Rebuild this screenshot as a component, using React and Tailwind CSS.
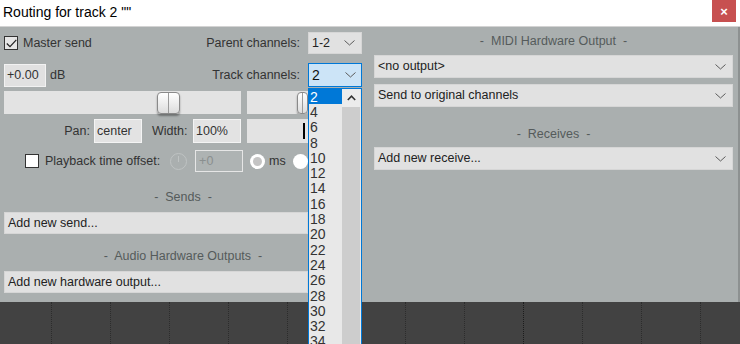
import React from 'react'

const CHANNELS = [2, 4, 6, 8, 10, 12, 14, 16, 18, 20, 22, 24, 26, 28, 30, 32, 34]
const GRID = [52, 111, 170, 229, 288, 347, 406, 464, 523, 582, 641, 701]

function Chevron() {
    return (
        <svg width="11" height="6" viewBox="0 0 11 6" className="shrink-0">
            <polyline points="0.5,0.5 5.5,5 10.5,0.5" fill="none" stroke="#5a5a5a" strokeWidth="1" />
        </svg>
    )
}

function Combo({ children, className = '' }) {
    return (
        <div className={`flex items-center justify-between bg-[#e1e1e1] border border-[#d6d6d6] pl-[3px] pr-[6px] text-[12.5px] text-[#222] ${className}`}>
            <span>{children}</span>
            <Chevron />
        </div>
    )
}

function Header({ children }) {
    return (
        <div className="text-center text-[12.5px] leading-[16px] text-[#555b5b] whitespace-pre">
            {children}
        </div>
    )
}

function Thumb() {
    return (
        <div className="relative w-[23px] h-[22px] rounded-[4px] border border-[#8a8a8a] bg-gradient-to-b from-white to-[#dcdcdc] shadow-[0_2px_2px_rgba(0,0,0,0.35)] flex justify-center">
            <div className="w-px h-full bg-[#9a9a9a]" />
        </div>
    )
}

export default function App() {
    return (
        <div className="relative w-[740px] h-[344px] overflow-hidden bg-[#424242] flex flex-col font-['Liberation_Sans',Arial,sans-serif]">
            {/* Title bar */}
            <div className="h-[27px] bg-white flex items-start justify-between border-b border-[#d3d3d3]">
                <span className="pl-[3px] pt-[4px] text-[14px] leading-[17px] text-black">Routing for track 2 ""</span>
                <div className="mr-[4px] w-[24px] h-[22px] bg-[#c75050] flex items-center justify-center text-white text-[13px] font-bold leading-none">×</div>
            </div>

            {/* Body */}
            <div className="h-[275px] bg-[#aaafaf] flex border-r-2 border-[#8d9191]">
                {/* Left column */}
                <div className="w-[362px] pl-[4px] pt-[5px] flex flex-col text-[12.5px] text-[#333]">
                    <div className="h-[22px] flex items-center">
                        <div className="w-[14px] h-[14px] border border-[#333] bg-[#e6e6e6] flex items-center justify-center">
                            <svg width="11" height="9" viewBox="0 0 11 9">
                                <polyline points="0.8,4.5 4,7.7 10.3,0.8" fill="none" stroke="#222" strokeWidth="1.2" />
                            </svg>
                        </div>
                        <span className="ml-[5px]">Master send</span>
                        <span className="ml-auto mr-[8px]">Parent channels:</span>
                        <Combo className="w-[54px] h-[22px]">1-2</Combo>
                    </div>

                    <div className="mt-[9px] h-[24px] flex items-center">
                        <div className="w-[42px] h-[23px] bg-[#e1e1e1] border border-[#f2f2f2] flex items-center pl-[2px]">+0.00</div>
                        <span className="ml-[4px]">dB</span>
                        <span className="ml-auto mr-[8px]">Track channels:</span>
                        <div className="w-[54px] h-[24px] bg-[#cce4f7] border border-[#0078d7] flex items-center justify-between pl-[3px] pr-[5px] text-[#111]">
                            <span className="text-[14px]">2</span>
                            <Chevron />
                        </div>
                    </div>

                    <div className="mt-[4px] h-[23px] flex gap-[6px]">
                        <div className="w-[237px] bg-[#e3e3e3] flex items-center pl-[153px]">
                            <Thumb />
                        </div>
                        <div className="w-[61px] bg-[#e3e3e3] flex items-center pl-[50px] overflow-hidden">
                            <Thumb />
                        </div>
                    </div>

                    <div className="mt-[5px] h-[24px] flex items-center">
                        <span className="w-[86px] text-right">Pan:</span>
                        <div className="ml-[4px] w-[48px] h-[24px] bg-[#e3e3e3] border border-[#f4f4f4] flex items-center pl-[2px]">center</div>
                        <span className="ml-[10px]">Width:</span>
                        <div className="ml-auto w-[48px] h-[24px] bg-[#e3e3e3] border border-[#f4f4f4] flex items-center pl-[2px]">100%</div>
                        <div className="ml-[6px] mr-[54px] w-[61px] h-[24px] bg-[#e3e3e3] flex items-center justify-end pr-[3px]">
                            <div className="w-[2px] h-[16px] bg-black" />
                        </div>
                    </div>

                    <div className="mt-[7px] h-[22px] flex items-center">
                        <div className="ml-[21px] w-[14px] h-[14px] border border-[#333] bg-white" />
                        <span className="ml-[6px]">Playback time offset:</span>
                        <div className="ml-[10px] w-[17px] h-[17px] rounded-full border border-[#bfc3c3] flex justify-center">
                            <div className="w-px h-[6px] mt-[2px] bg-[#bfc3c3]" />
                        </div>
                        <div className="ml-[8px] w-[48px] h-[22px] border border-[#e6e6e6] bg-[#aeb3b3] flex items-center pl-[3px] text-[#8a8f8f]">+0</div>
                        <div className="ml-[7px] w-[15px] h-[15px] rounded-full bg-white flex items-center justify-center">
                            <div className="w-[9px] h-[9px] rounded-full bg-[#c4c4c4]" />
                        </div>
                        <span className="ml-[4px]">ms</span>
                        <div className="ml-[7px] w-[15px] h-[15px] rounded-full bg-white" />
                    </div>

                    <div className="mt-[17px]">
                        <Header>{'-  Sends  -'}</Header>
                    </div>
                    <div className="mt-[7px] w-[304px] h-[22px] bg-[#e1e1e1] border border-[#d6d6d6] flex items-center pl-[3px] text-[#222]">Add new send...</div>

                    <div className="mt-[14px]">
                        <Header>{'-  Audio Hardware Outputs  -'}</Header>
                    </div>
                    <div className="mt-[7px] w-[304px] h-[22px] bg-[#e1e1e1] border border-[#d6d6d6] flex items-center pl-[3px] text-[#222]">Add new hardware output...</div>
                </div>

                {/* Right column */}
                <div className="ml-[12px] w-[359px] pt-[6px] flex flex-col">
                    <Header>{'-  MIDI Hardware Output  -'}</Header>
                    <Combo className="mt-[6px] h-[23px]">{'<no output>'}</Combo>
                    <Combo className="mt-[6px] h-[23px]">Send to original channels</Combo>
                    <div className="mt-[19px]">
                        <Header>{'-  Receives  -'}</Header>
                    </div>
                    <Combo className="mt-[5px] h-[23px]">Add new receive...</Combo>
                </div>
            </div>

            {/* Arrange view behind the dialog */}
            <div className="flex-1 flex">
                {GRID.map((x, i) => (
                    <div
                        key={x}
                        className={`h-full border-r border-dotted ${i === 8 ? 'border-[#1c1c1c]' : 'border-[#2c2c2c]'} ${i === 0 ? 'w-[52px]' : 'w-[59px]'}`}
                    />
                ))}
            </div>

            {/* Open channel list of the Track channels combo */}
            <div className="absolute left-[308px] top-[88px] w-[54px] h-[270px] border border-[#0078d7] bg-[#e8e8e8] flex">
                <div className="w-[33px] flex flex-col">
                    {CHANNELS.map((n, i) => (
                        <div
                            key={n}
                            className={`h-[15.3px] shrink-0 flex items-center pl-[1px] text-[14px] leading-none ${i === 0 ? 'bg-[#0078d7] text-white' : 'text-[#333]'}`}
                        >
                            {n}
                        </div>
                    ))}
                </div>
                <div className="w-[18px] flex flex-col bg-[#cdcdcd]">
                    <div className="h-[18px] bg-[#ececec] flex items-center justify-center">
                        <svg width="9" height="6" viewBox="0 0 9 6">
                            <polyline points="0.8,5 4.5,1.2 8.2,5" fill="none" stroke="#333" strokeWidth="1.6" />
                        </svg>
                    </div>
                </div>
                <div className="w-[1px] bg-[#e8e8e8]" />
            </div>
        </div>
    )
}
